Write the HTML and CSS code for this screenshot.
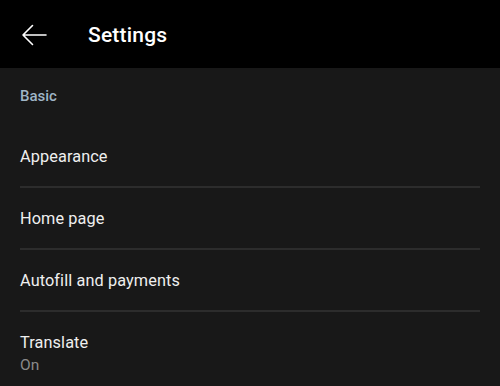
FILE: index.html
```html
<!DOCTYPE html>
<html>
<head>
<meta charset="utf-8">
<link rel="stylesheet" href="styles.css">
</head>
<body>
<div class="app">
  <header class="topbar">
    <svg class="back" width="26" height="22" viewBox="0 0 26 22">
      <path d="M25 11H2M11.5 1.5L2 11l9.5 9.5" fill="none" stroke="#fff" stroke-width="1.6" stroke-linecap="round" stroke-linejoin="round"/>
    </svg>
    <h1 class="title">Settings</h1>
  </header>
  <main class="content">
    <div class="section-label">Basic</div>
    <div class="row"><span class="row-title">Appearance</span></div>
    <div class="row"><span class="row-title">Home page</span></div>
    <div class="row"><span class="row-title">Autofill and payments</span></div>
    <div class="row row-last">
      <span class="row-title">Translate</span>
      <span class="row-sub">On</span>
    </div>
  </main>
</div>
</body>
</html>
```
FILE: styles.css
```css
* { box-sizing: border-box; }
html, body { margin: 0; padding: 0; }
body {
  background: #181818;
  font-family: Roboto, "Noto Sans", sans-serif;
  color: #e8e8e8;
  width: 500px;
  height: 386px;
  overflow: hidden;
}
.topbar {
  height: 68px;
  background: #000;
  display: flex;
  align-items: center;
  padding-left: 21px;
  padding-top: 2px;
}
.back { display: block; }
.title {
  margin: 0 0 0 41px;
  font-size: 21px;
  font-weight: 500;
  color: #fff;
  letter-spacing: 0.2px;
}
.content { display: flex; flex-direction: column; }
.section-label {
  height: 58px;
  display: flex;
  align-items: center;
  padding-left: 20px;
  padding-bottom: 2px;
  font-size: 15px;
  font-weight: 500;
  color: #9fb5c6;
}
.row {
  height: 62px;
  margin: 0 20px;
  border-bottom: 2px solid #2c2c2c;
  display: flex;
  flex-direction: column;
  justify-content: center;
}
.row-last { border-bottom: none; padding-top: 20px; }
.row-title { font-size: 16.3px; color: #efefef; letter-spacing: 0.1px; }
.row-sub { font-size: 15.5px; color: #8a8a8a; margin-top: 4px; }
```
